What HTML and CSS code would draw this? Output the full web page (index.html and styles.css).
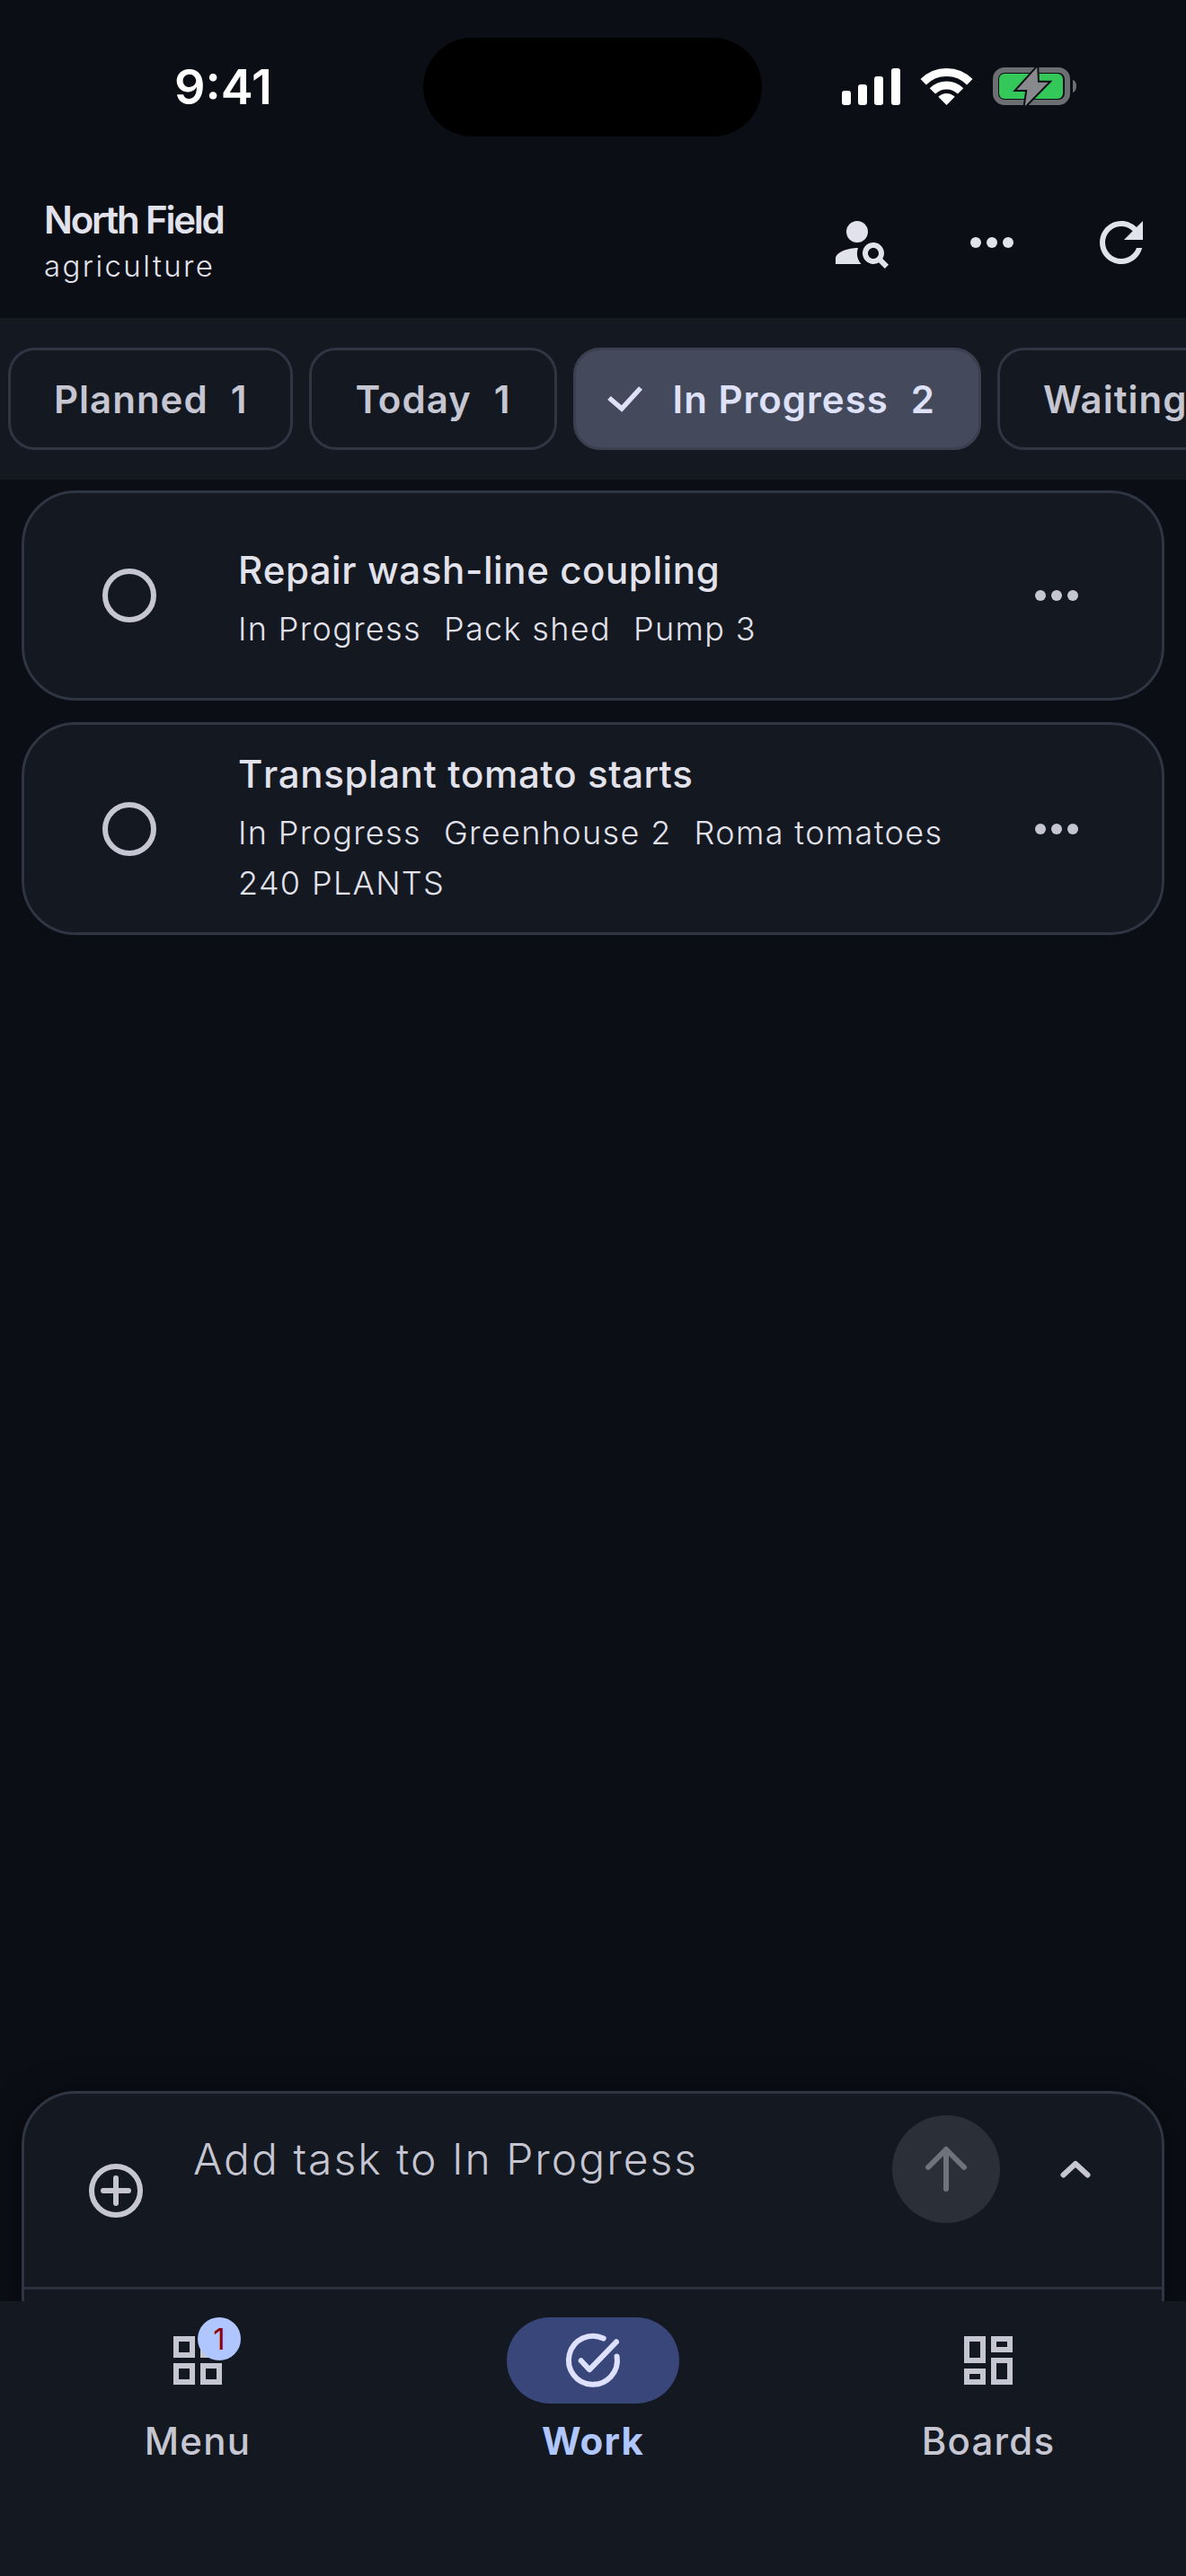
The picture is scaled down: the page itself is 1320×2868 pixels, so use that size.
FILE: index.html
```html
<!DOCTYPE html>
<html lang="en">
<head>
    <meta charset="UTF-8">
    <meta name="viewport" content="width=device-width, initial-scale=1.0">
    <title>North Field</title>
    <link rel="stylesheet" href="styles.css">
</head>
<body>
    <div class="statusBar">
        <div class="clock">9:41</div>
        <div class="island"></div>
        <svg class="statusIcons" viewBox="0 0 261 42" width="261" height="42">
            <rect x="0" y="26" width="10" height="16" rx="3" fill="#fff"/>
            <rect x="18" y="19" width="10" height="23" rx="3" fill="#fff"/>
            <rect x="36" y="10" width="10" height="32" rx="3" fill="#fff"/>
            <rect x="55" y="1" width="10" height="41" rx="3" fill="#fff"/>
            <path d="M90.7 16.2A36.5 36.5 0 0 1 142.3 16.2" fill="none" stroke="#fff" stroke-width="9"/>
            <path d="M100.9 26.4A22 22 0 0 1 132.1 26.4" fill="none" stroke="#fff" stroke-width="9"/>
            <path d="M116.5 42L107.3 32.8A13 13 0 0 1 125.7 32.8Z" fill="#fff"/>
            <rect x="171" y="3" width="80" height="36" rx="10" fill="none" stroke="#6c6e72" stroke-width="6"/>
            <rect x="175" y="7" width="71" height="28" rx="6" fill="#34c759"/>
            <path d="M257 14a6 7 0 0 1 4 7a6 7 0 0 1-4 7Z" fill="#6c6e72"/>
            <path d="M217.3 0L194.7 25H206.3L203.7 43.3L229.7 16.7H218Z" fill="#88898d" stroke="#0b0e15" stroke-width="4" paint-order="stroke"/>
        </svg>
    </div>

    <header class="appBar">
        <div class="appTitle">
            <div class="appName">North Field</div>
            <div class="appSub">agriculture</div>
        </div>
        <div class="appActions">
            <button class="iconBtn" type="button">
                <svg viewBox="0 0 24 24" width="72" height="72"><circle cx="10" cy="8" r="4"/><path d="M10.35 14.01C7.62 13.91 2 15.27 2 18v2h9.54c-2.47-2.76-1.23-5.89-1.19-5.99z"/><path d="M19.43 18.02c.47-.8.7-1.77.48-2.82-.34-1.64-1.72-2.95-3.38-3.16-2.63-.34-4.85 1.87-4.5 4.5.22 1.66 1.52 3.04 3.16 3.38 1.05.22 2.02-.01 2.82-.48l2.26 2.26 1.41-1.41-2.25-2.27zM16 18c-1.1 0-2-.9-2-2s.9-2 2-2 2 .9 2 2-.9 2-2 2z"/></svg>
            </button>
            <button class="iconBtn" type="button">
                <svg viewBox="0 0 24 24" width="72" height="72"><circle cx="6" cy="12" r="2"/><circle cx="12" cy="12" r="2"/><circle cx="18" cy="12" r="2"/></svg>
            </button>
            <button class="iconBtn" type="button">
                <svg viewBox="0 0 24 24" width="72" height="72"><path d="M17.65 6.35C16.2 4.9 14.21 4 12 4c-4.42 0-7.99 3.58-7.99 8s3.57 8 7.99 8c3.73 0 6.84-2.55 7.73-6h-2.08c-.82 2.33-3.04 4-5.65 4-3.31 0-6-2.69-6-6s2.69-6 6-6c1.66 0 3.14.69 4.22 1.78L13 11h7V4l-2.35 2.35z"/></svg>
            </button>
        </div>
    </header>

    <nav class="tabs">
        <div class="chip"><span>Planned</span><span class="count">1</span></div>
        <div class="chip"><span>Today</span><span class="count">1</span></div>
        <div class="chip chipActive">
            <svg viewBox="0 0 54 54" width="54" height="54"><path d="M10 26L24 38L45 15" fill="none" stroke="currentColor" stroke-width="5.5"/></svg>
            <span>In Progress</span><span class="count">2</span>
        </div>
        <div class="chip"><span>Waiting</span></div>
    </nav>

    <main class="taskList">
        <div class="task">
            <svg class="taskCheck" viewBox="0 0 24 24" width="72" height="72"><circle cx="12" cy="12" r="9" fill="none" stroke="currentColor" stroke-width="2"/></svg>
            <div class="taskBody">
                <div class="taskTitle">Repair wash-line coupling</div>
                <div class="taskMeta"><span>In Progress</span><span>Pack shed</span><span>Pump 3</span></div>
            </div>
            <svg class="taskMore" viewBox="0 0 24 24" width="72" height="72"><circle cx="6" cy="12" r="2"/><circle cx="12" cy="12" r="2"/><circle cx="18" cy="12" r="2"/></svg>
        </div>
        <div class="task taskTall">
            <svg class="taskCheck" viewBox="0 0 24 24" width="72" height="72"><circle cx="12" cy="12" r="9" fill="none" stroke="currentColor" stroke-width="2"/></svg>
            <div class="taskBody">
                <div class="taskTitle">Transplant tomato starts</div>
                <div class="taskMeta"><span>In Progress</span><span>Greenhouse 2</span><span>Roma tomatoes</span><span>240 PLANTS</span></div>
            </div>
            <svg class="taskMore" viewBox="0 0 24 24" width="72" height="72"><circle cx="6" cy="12" r="2"/><circle cx="12" cy="12" r="2"/><circle cx="18" cy="12" r="2"/></svg>
        </div>
    </main>

    <section class="composerWrap">
        <div class="composer">
            <div class="composerRow">
                <svg class="composerAdd" viewBox="0 0 60 60" width="60" height="60"><circle cx="30" cy="30" r="27" fill="none" stroke="currentColor" stroke-width="6"/><path d="M30 16V44M16 30H44" fill="none" stroke="currentColor" stroke-width="6" stroke-linecap="round"/></svg>
                <div class="composerInput">Add task to In Progress</div>
                <div class="sendBtn">
                    <svg viewBox="0 0 60 60" width="60" height="60"><path d="M30 52V8M10 28L30 8L50 28" fill="none" stroke="currentColor" stroke-width="6" stroke-linecap="round" stroke-linejoin="round"/></svg>
                </div>
                <svg class="composerToggle" viewBox="0 0 36 24" width="36" height="24"><path d="M3.5 18.5L17 6L30.5 18.5" fill="none" stroke="currentColor" stroke-width="6" stroke-linecap="round" stroke-linejoin="round"/></svg>
            </div>
        </div>
    </section>

    <footer class="bottomNav">
        <div class="navItem">
            <div class="navIcon">
                <svg viewBox="0 0 24 24" width="72" height="72"><path d="M3 3v8h8V3H3zm6 6H5V5h4v4zm-6 4v8h8v-8H3zm6 6H5v-4h4v4zm4-16v8h8V3h-8zm6 6h-4V5h4v4zm-6 4v8h8v-8h-8zm6 6h-4v-4h4v4z"/></svg>
                <span class="navBadge">1</span>
            </div>
            <div class="navLabel">Menu</div>
        </div>
        <div class="navItem navItemActive">
            <div class="navIcon">
                <svg viewBox="0 0 72 72" width="72" height="72"><path d="M47.7 11.5A27 27 0 1 0 62.6 31.5" fill="none" stroke="currentColor" stroke-width="6" stroke-linecap="round"/><path d="M22.7 36.3L32 46.3L62 15.3" fill="none" stroke="currentColor" stroke-width="6" stroke-linecap="round" stroke-linejoin="round"/></svg>
            </div>
            <div class="navLabel">Work</div>
        </div>
        <div class="navItem">
            <div class="navIcon">
                <svg viewBox="0 0 24 24" width="72" height="72"><path d="M19 5v2h-4V5h4M9 5v6H5V5h4m10 8v6h-4v-6h4M9 17v2H5v-2h4M21 3h-8v6h8V3zM11 3H3v10h8V3zm10 8h-8v10h8V11zm-10 4H3v6h8v-6z"/></svg>
            </div>
            <div class="navLabel">Boards</div>
        </div>
    </footer>
</body>
</html>
```

FILE: styles.css
```css
* {
    box-sizing: border-box;
}
body {
    margin: 0;
    width: 1320px;
    height: 2868px;
    overflow: hidden;
    display: flex;
    flex-direction: column;
    background-color: #0b0e15;
    color: #e2e2ea;
    font-family: Inter, "Noto Sans", sans-serif;
}

/* status bar */
.statusBar {
    height: 186px;
    flex-shrink: 0;
    display: grid;
    grid-template-columns: 471px 377px 1fr;
    align-items: start;
}
.clock {
    padding-left: 194px;
    padding-top: 64px;
    font-size: 54px;
    line-height: 65px;
    font-weight: 600;
    color: #fff;
}
.island {
    margin-top: 42px;
    height: 110px;
    border-radius: 55px;
    background-color: #000;
}
.statusIcons {
    margin-top: 75px;
    margin-left: 89px;
    overflow: visible;
}

/* app bar */
.appBar {
    height: 168px;
    flex-shrink: 0;
    display: flex;
    align-items: center;
    justify-content: space-between;
    padding-left: 49px;
}
.appTitle {
    padding-bottom: 6px;
}
.appName {
    font-size: 42px;
    line-height: 54px;
    font-weight: 600;
    letter-spacing: -2.2px;
    color: #e2e2ec;
}
.appSub {
    font-size: 33px;
    line-height: 42px;
    font-weight: 300;
    letter-spacing: 2.4px;
    color: #e2e2ec;
    margin-top: 3px;
}
.appActions {
    display: flex;
}
.iconBtn {
    width: 144px;
    height: 144px;
    padding: 0;
    border: none;
    background: none;
    display: flex;
    align-items: center;
    justify-content: center;
    fill: #e2e2ec;
}

/* status tabs */
.tabs {
    height: 180px;
    flex-shrink: 0;
    display: flex;
    gap: 18px;
    padding: 33px 0 33px 9px;
    overflow: hidden;
    background-color: #141820;
}
.chip {
    flex-shrink: 0;
    height: 114px;
    display: flex;
    align-items: center;
    padding: 0 48px;
    border: 3px solid #2f3542;
    border-radius: 30px;
    font-size: 42px;
    font-weight: 600;
    letter-spacing: 1px;
    color: #c5c6d2;
}
.count {
    margin-left: 25px;
}
.chipActive {
    padding-left: 27px;
    background-color: #444a5c;
    border-color: #3a4050;
    color: #dee1f9;
}
.chipActive svg {
    margin-right: 27px;
}

/* task cards */
.taskList {
    display: flex;
    flex-direction: column;
    gap: 24px;
    padding: 12px 24px 0;
}
.task {
    min-height: 234px;
    display: flex;
    align-items: center;
    padding: 0 81px;
    border: 3px solid #2f3542;
    border-radius: 60px;
    background-color: #141820;
}
.taskTall {
    min-height: 237px;
}
.taskCheck {
    flex-shrink: 0;
    color: #c5c6d2;
}
.taskBody {
    flex: 1;
    margin-left: 85px;
    margin-top: 5px;
}
.taskTall .taskBody {
    margin-top: -4px;
}
.taskTitle {
    font-size: 42px;
    line-height: 54px;
    font-weight: 500;
    letter-spacing: 0.6px;
    font-kerning: none;
    color: #e2e2ec;
}
.taskMeta {
    display: flex;
    flex-wrap: wrap;
    column-gap: 25px;
    row-gap: 8px;
    margin-top: 14px;
    font-size: 36px;
    line-height: 48px;
    font-weight: 300;
    letter-spacing: 1.35px;
    color: #e2e2ec;
}
.taskMore {
    flex-shrink: 0;
    fill: #c5c6d2;
}

.composerWrap {
    margin-top: auto;
    height: 282px;
    flex-shrink: 0;
    padding: 48px 24px 0;
    overflow: hidden;
}
.composer {
    height: 300px;
    border: 3px solid #2f3542;
    border-radius: 60px;
    background-color: #141820;
    box-shadow: 0 0 36px rgba(0, 0, 0, 0.45);
}
.composerRow {
    height: 218px;
    display: flex;
    align-items: flex-start;
    padding: 24px 0 0 72px;
    border-bottom: 3px solid #2a303c;
}
.composerAdd {
    flex-shrink: 0;
    margin-top: 54px;
    color: #c5c6d2;
}
.composerInput {
    flex: 1;
    margin-left: 56px;
    margin-top: 19px;
    font-size: 48px;
    line-height: 60px;
    font-weight: 300;
    letter-spacing: 2px;
    color: #c5c6d2;
}
.sendBtn {
    width: 120px;
    height: 120px;
    flex-shrink: 0;
    display: flex;
    align-items: center;
    justify-content: center;
    border-radius: 50%;
    background-color: #2b2f38;
    color: #6f737c;
}
.composerToggle {
    flex-shrink: 0;
    margin: 48px 77px 0 67px;
    color: #c5c6d2;
}

/* bottom nav */
.bottomNav {
    height: 306px;
    flex-shrink: 0;
    display: grid;
    grid-template-columns: repeat(3, 1fr);
    padding-top: 18px;
    background-color: #141820;
}
.navItem {
    display: flex;
    flex-direction: column;
    align-items: center;
    color: #c5c6d2;
    fill: #c5c6d2;
}
.navIcon {
    position: relative;
    width: 192px;
    height: 96px;
    display: flex;
    align-items: center;
    justify-content: center;
    border-radius: 48px;
}
.navBadge {
    position: absolute;
    left: 96px;
    top: 0;
    width: 48px;
    height: 48px;
    border-radius: 50%;
    background-color: #b0c6ff;
    color: #8c0009;
    font-size: 33px;
    line-height: 48px;
    text-align: center;
}
.navLabel {
    margin-top: 18px;
    font-size: 42px;
    line-height: 48px;
    font-weight: 500;
    letter-spacing: 1.2px;
}
.navItemActive .navIcon {
    background-color: #38467a;
    color: #dde1ff;
}
.navItemActive .navLabel {
    color: #b0c6ff;
    font-weight: 700;
}
```
